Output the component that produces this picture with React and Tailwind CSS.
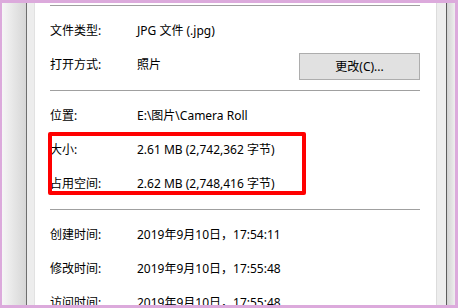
import React from "react";

const font = { fontFamily: '"Noto Sans", "Noto Sans CJK SC", sans-serif' };

const Row = ({ label, value, children }) => (
  <div className="flex items-center h-[34px] text-[12px] text-black">
    <div className="w-[87px] shrink-0">{label}</div>
    <div className="flex-1 whitespace-nowrap">{value}</div>
    {children}
  </div>
);

const Divider = () => <div className="h-px bg-[#a0a0a0]" />;

const App = () => {
  return (
    <div
      className="w-[458px] h-[308px] overflow-hidden bg-[#dcaadc] pl-[2px] pt-[3px] pr-[3px] pb-[3px]"
      style={font}
    >
      <div className="flex h-full overflow-hidden">
        {/* left window edge */}
        <div className="w-[24px] shrink-0 bg-gradient-to-r from-[#f6f6f6] to-[#d6d6d6]" />
        <div className="w-px shrink-0 bg-[#6e6e6e]" />
        <div className="w-[8px] shrink-0 bg-[#ededed] border-r border-[#e2e2e2]" />

        {/* property sheet */}
        <div className="flex-1 bg-white pl-[15px] pr-[16px] pt-[2px] relative">
          <Divider />
          <div className="mt-[8px]">
            <Row label="文件类型:" value="JPG 文件 (.jpg)" />
            <Row label="打开方式:" value="照片">
              <button className="w-[121px] h-[27px] mt-[3px] bg-[#e1e1e1] border border-[#adadad] text-[12px] text-black">
                更改(C)...
              </button>
            </Row>
          </div>
          <div className="mt-[8px]">
            <Divider />
          </div>
          <div className="mt-[8px]">
            <Row label="位置:" value="E:\图片\Camera Roll" />
            <Row label="大小:" value="2.61 MB (2,742,362 字节)" />
            <Row label="占用空间:" value="2.62 MB (2,748,416 字节)" />
          </div>
          <div className="mt-[8px]">
            <Divider />
          </div>
          <div className="mt-[8px]">
            <Row label="创建时间:" value="2019年9月10日，17:54:11" />
            <Row label="修改时间:" value="2019年9月10日，17:55:48" />
            <Row label="访问时间:" value="2019年9月10日，17:55:48" />
          </div>

          {/* red highlight */}
          <div className="absolute left-[13px] top-[129px] w-[258px] h-[63px] border-[4px] border-[#ff0000] rounded-[2px] pointer-events-none" />
        </div>

        {/* right window edge */}
        <div className="w-[10px] shrink-0 bg-[#ededed] border-l border-[#dcdcdc]" />
        <div className="w-px shrink-0 bg-[#5c5c5c]" />
        <div className="w-[8px] shrink-0 bg-gradient-to-r from-[#d2d2d2] to-[#eeeeee]" />
      </div>
    </div>
  );
};

export default App;
